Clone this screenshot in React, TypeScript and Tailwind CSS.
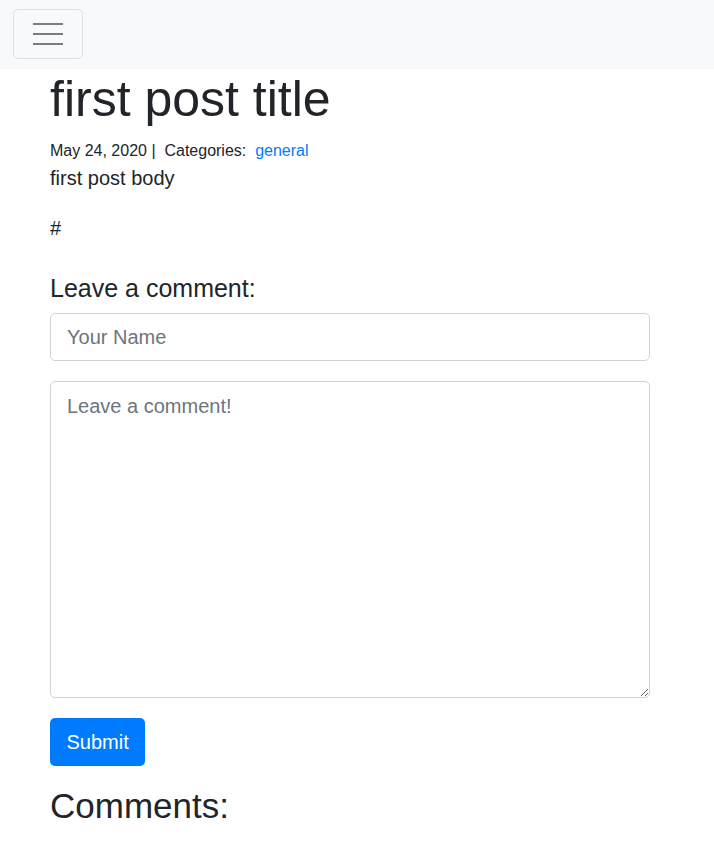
import React from 'react';

function TogglerIcon() {
  return (
    <svg width="30" height="30" viewBox="0 0 30 30" className="block">
      <path
        d="M0 5h30M0 15h30M0 25h30"
        stroke="rgba(0,0,0,0.5)"
        strokeWidth="2"
        strokeLinecap="round"
        strokeMiterlimit="10"
      />
    </svg>
  );
}

export default function App() {
  return (
    <div className="min-h-[850px] bg-white text-[#212529] font-['Liberation_Sans',Arial,sans-serif]">
      {/* Navbar */}
      <nav className="h-[69px] bg-[#f8f9fa] flex items-start pl-[13px] pt-[9px]">
        <button
          type="button"
          className="w-[70px] h-[50px] border border-black/10 rounded-[5px] flex items-center justify-center"
        >
          <TogglerIcon />
        </button>
      </nav>

      <div className="pl-[50px] w-[650px]">
        <h1 className="text-[50px] leading-[60px] font-normal">first post title</h1>
        <div className="mt-[10px] text-[16px] leading-[24px]">
          May 24, 2020 |&nbsp;&nbsp;Categories:&nbsp;&nbsp;
          <a href="#" className="text-[#007bff]">general</a>
        </div>
        <p className="text-[20px] leading-[30px]">first post body</p>
        <p className="mt-[20px] text-[20px] leading-[30px]">#</p>

        <h5 className="mt-[30px] text-[25px] leading-[30px] font-normal">Leave a comment:</h5>
        <form className="mt-[10px] flex flex-col gap-[20px]">
          <input
            type="text"
            placeholder="Your Name"
            className="w-[600px] h-[48px] px-[16px] text-[20px] border border-[#ced4da] rounded-[5px] placeholder:text-[#6c757d] outline-none"
          />
          <textarea
            placeholder="Leave a comment!"
            className="w-[600px] h-[317px] px-[16px] py-[9px] text-[20px] leading-[30px] border border-[#ced4da] rounded-[5px] placeholder:text-[#6c757d] outline-none"
          />
          <div>
            <button
              type="button"
              className="h-[48px] px-[16.5px] text-[20px] text-white bg-[#007bff] rounded-[5px]"
            >
              Submit
            </button>
          </div>
        </form>

        <h3 className="mt-[19px] text-[35px] leading-[42px] font-normal">Comments:</h3>
      </div>
    </div>
  );
}
